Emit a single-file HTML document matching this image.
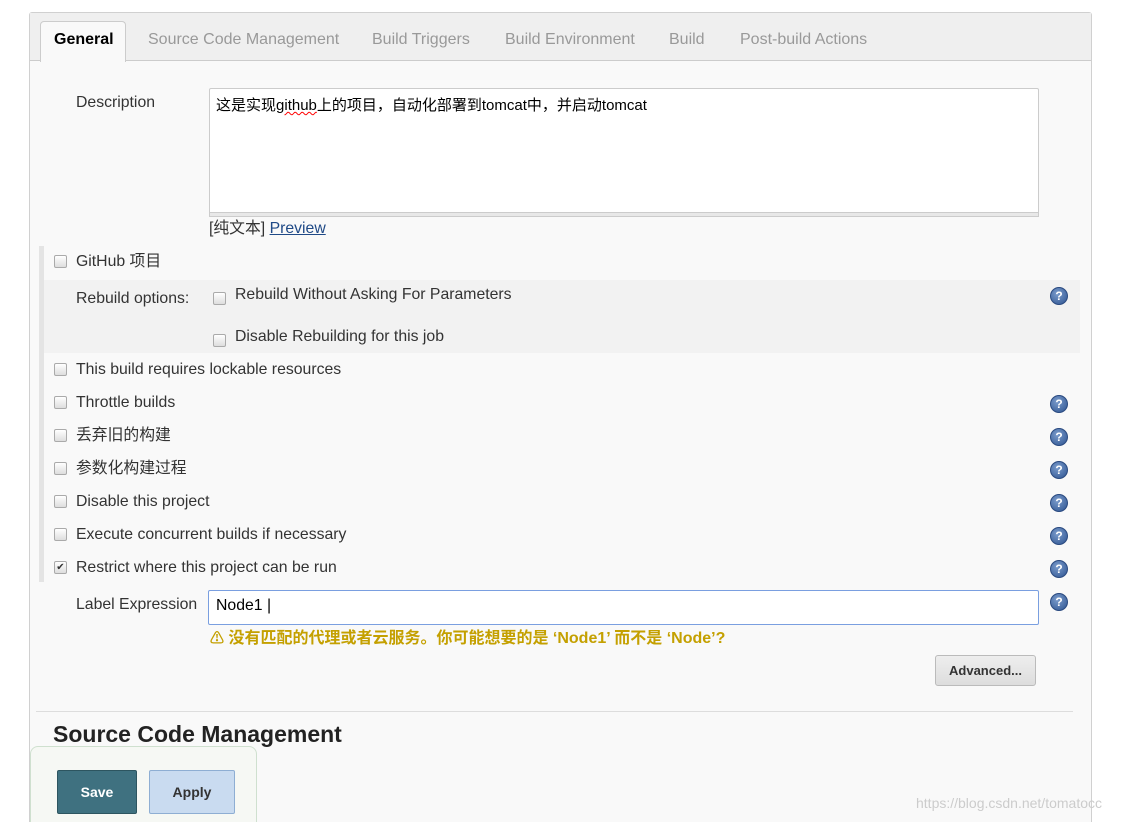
<!DOCTYPE html>
<html><head><meta charset="utf-8"><style>
html,body{margin:0;width:1134px;height:822px;overflow:hidden}
body{background:#fff;font-family:"Liberation Sans","Noto Sans CJK SC",sans-serif;font-size:15.8px;color:#333;position:relative}
.a{position:absolute;white-space:nowrap;line-height:20px}
.panel{position:absolute;left:29px;top:12px;width:1061px;height:830px;border:1px solid #d0d0d0;background:#f9f9f9;border-radius:3px}
.tabbar{position:absolute;left:30px;top:13px;width:1061px;height:47px;background:#efefef;border-bottom:1px solid #ccc}
.tab{position:absolute;top:30px;color:#999;font-size:16px;line-height:20px}
.cb{position:absolute;width:11px;height:11px;border:1px solid #aaa;border-radius:2px;background:linear-gradient(#fff,#ddd)}
.h{position:absolute;width:16px;height:16px;border-radius:50%;background:radial-gradient(circle at 40% 35%,#7b9ccc,#2d5390);border:1px solid #2a4a80;color:#fff;font-size:12px;font-weight:bold;text-align:center;line-height:16px}
</style></head><body>
<div class="panel"></div>
<div class="tabbar"></div>
<div class="a" style="left:40px;top:21px;width:84px;height:40px;background:#f9f9f9;border:1px solid #ccc;border-bottom:none;border-radius:4px 4px 0 0"></div>
<div class="a" style="left:54px;top:30px;font-weight:bold;color:#000;font-size:16px">General</div>
<div class="tab" style="left:148px">Source Code Management</div>
<div class="tab" style="left:372px">Build Triggers</div>
<div class="tab" style="left:505px">Build Environment</div>
<div class="tab" style="left:669px">Build</div>
<div class="tab" style="left:740px">Post-build Actions</div>

<div class="a" style="left:76px;top:93px">Description</div>
<div class="a" style="left:209px;top:88px;width:828px;height:124px;background:#fff;border:1px solid #ccc;border-radius:2px"></div>
<div class="a" style="left:209px;top:212px;width:830px;height:5px;background:#e8e8e8;border:1px solid #ccc;box-sizing:border-box"></div>
<div class="a" style="left:216px;top:96px;color:#000;font-size:15px">这是实现<span style="text-decoration:underline wavy red;text-decoration-thickness:1px">github</span>上的项目，自动化部署到tomcat中，并启动tomcat</div>
<div class="a" style="left:209px;top:219px">[纯文本] <span style="color:#204a87;text-decoration:underline">Preview</span></div>

<div class="a" style="left:39px;top:246px;width:5px;height:336px;background:#e4e4e4"></div>
<div class="a" style="left:44px;top:280px;width:1036px;height:73px;background:#f2f2f2"></div>

<div class="cb" style="left:54px;top:255px"></div><div class="a" style="left:76px;top:252px">GitHub 项目</div>
<div class="a" style="left:76px;top:289px">Rebuild options:</div>
<div class="cb" style="left:213px;top:292px"></div><div class="a" style="left:235px;top:285px">Rebuild Without Asking For Parameters</div>
<div class="cb" style="left:213px;top:334px"></div><div class="a" style="left:235px;top:327px">Disable Rebuilding for this job</div>
<div class="cb" style="left:54px;top:363px"></div><div class="a" style="left:76px;top:360px">This build requires lockable resources</div>
<div class="cb" style="left:54px;top:396px"></div><div class="a" style="left:76px;top:393px">Throttle builds</div>
<div class="cb" style="left:54px;top:429px"></div><div class="a" style="left:76px;top:426px">丢弃旧的构建</div>
<div class="cb" style="left:54px;top:462px"></div><div class="a" style="left:76px;top:459px">参数化构建过程</div>
<div class="cb" style="left:54px;top:495px"></div><div class="a" style="left:76px;top:492px">Disable this project</div>
<div class="cb" style="left:54px;top:528px"></div><div class="a" style="left:76px;top:525px">Execute concurrent builds if necessary</div>
<div class="cb" style="left:54px;top:561px;font-size:10px;line-height:11px;text-align:center">✔</div><div class="a" style="left:76px;top:558px">Restrict where this project can be run</div>

<div class="h" style="left:1050px;top:287px">?</div>
<div class="h" style="left:1050px;top:395px">?</div>
<div class="h" style="left:1050px;top:428px">?</div>
<div class="h" style="left:1050px;top:461px">?</div>
<div class="h" style="left:1050px;top:494px">?</div>
<div class="h" style="left:1050px;top:527px">?</div>
<div class="h" style="left:1050px;top:560px">?</div>
<div class="h" style="left:1050px;top:593px">?</div>

<div class="a" style="left:76px;top:595px">Label Expression</div>
<div class="a" style="left:208px;top:590px;width:829px;height:33px;background:#fff;border:1px solid #7a9fe0;border-radius:2px"></div>
<div class="a" style="left:216px;top:596px;color:#000">Node1 |</div>
<div class="a" style="left:210px;top:628px;font-weight:bold;color:#c4a000;font-size:16px"><span style="font-size:14px">⚠</span> 没有匹配的代理或者云服务。你可能想要的是 ‘Node1’ 而不是 ‘Node’?</div>
<div class="a" style="left:935px;top:655px;width:99px;height:29px;background:linear-gradient(#eee,#ddd);border:1px solid #bbb;border-radius:3px;font-size:13px;font-weight:bold;text-align:center;line-height:29px;color:#333">Advanced...</div>

<div class="a" style="left:36px;top:711px;width:1037px;height:1px;background:#ddd"></div>
<div class="a" style="left:53px;top:721px;font-size:23px;font-weight:bold;color:#222;line-height:26px">Source Code Management</div>

<div class="a" style="left:30px;top:746px;width:225px;height:90px;background:#f6f8f4;border:1px solid #cfe0cf;border-radius:8px"></div>
<div class="a" style="left:57px;top:770px;width:78px;height:42px;background:#3f7180;border:1px solid #2d5560;border-radius:2px;color:#fff;font-weight:bold;font-size:14px;text-align:center;line-height:42px">Save</div>
<div class="a" style="left:149px;top:770px;width:84px;height:42px;background:#c9dbf0;border:1px solid #8eaed3;border-radius:2px;color:#333;font-weight:bold;font-size:14px;text-align:center;line-height:42px">Apply</div>
<div class="a" style="left:916px;top:793px;color:#ccc;font-size:14px">https://blog.csdn.net/tomatocc</div>
</body></html>
